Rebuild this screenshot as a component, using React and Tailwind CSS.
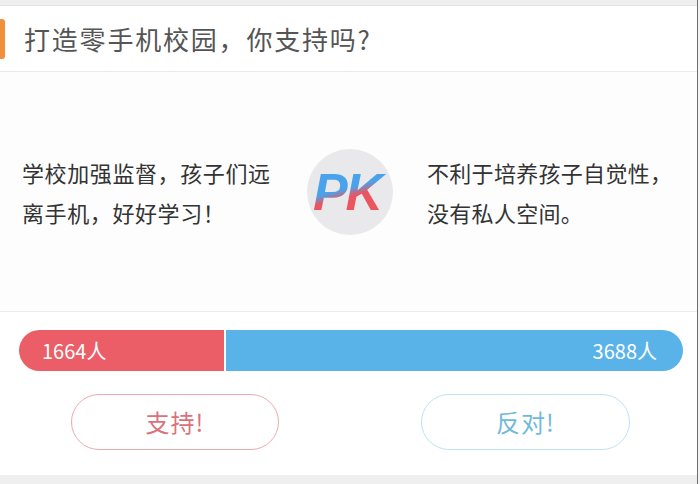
export default function App() {
  const cjk = { fontFamily: '"Noto Sans CJK SC", "Noto Sans", sans-serif' };
  return (
    <div className="flex w-[700px] h-[484px] bg-white overflow-hidden" style={cjk}>
      <div className="flex flex-col w-[697px] h-full">
        <div className="h-[6px] bg-[#efefef] border-b border-[#e2e2e2]" />
        <div className="h-[65px] flex items-center bg-white">
          <div className="w-[5px] h-[40px] bg-[#f0903a] rounded-r-[3px]" />
          <div className="ml-[19px] text-[26px] tracking-[1.8px] text-[#555555] leading-none">
            打造零手机校园，你支持吗?
          </div>
        </div>
        <div className="h-[1px] bg-[#e9e9e9]" />
        <div className="h-[239px] flex items-center bg-[#fdfdfd]">
          <div className="w-[307px] pl-[22px] text-[22px] tracking-[0.6px] leading-[40px] text-[#333333]">
            <div>学校加强监督，孩子们远</div>
            <div>离手机，好好学习！</div>
          </div>
          <div className="w-[86px] h-[86px] rounded-full bg-[#e9e9ec] flex items-center justify-center">
            <span
              className="italic font-bold text-[52px] leading-none tracking-[-2px] bg-clip-text text-transparent pr-[6px]"
              style={{
                fontFamily: '"Liberation Sans", Arial, sans-serif',
                backgroundImage: 'linear-gradient(165deg, #4aa2ea 0%, #4aa2ea 44%, #ea5560 56%, #ea5560 100%)',
              }}
            >
              PK
            </span>
          </div>
          <div className="pl-[34px] text-[22px] tracking-[0.3px] leading-[40px] text-[#333333]">
            <div>不利于培养孩子自觉性，</div>
            <div>没有私人空间。</div>
          </div>
        </div>
        <div className="h-[1px] bg-[#ececec]" />
        <div className="flex-1 flex flex-col bg-white">
          <div className="mt-[18px] ml-[19px] mr-[14px] h-[41px] flex rounded-full overflow-hidden text-white text-[20px]">
            <div className="w-[205px] bg-[#eb5e67] flex items-center pl-[23px]">1664人</div>
            <div className="w-[2px] bg-white" />
            <div className="flex-1 bg-[#5ab3e8] flex items-center justify-end pr-[26px]">3688人</div>
          </div>
          <div className="mt-[23px] flex">
            <div className="ml-[71px] w-[208px] h-[56px] rounded-full border border-[#eaaab0] flex items-center justify-center text-[24px] text-[#d9727b] tracking-[1px]">
              支持!
            </div>
            <div className="ml-[142px] w-[209px] h-[56px] rounded-full border border-[#bfe2ee] flex items-center justify-center text-[24px] text-[#6fbadb] tracking-[1px]">
              反对!
            </div>
          </div>
        </div>
        <div className="h-[9px] bg-[#efefef]" />
      </div>
      <div className="w-[1px] h-full bg-[#6f6f6f]" />
      <div className="w-[2px] h-full bg-[#f4f4f4]" />
    </div>
  );
}
